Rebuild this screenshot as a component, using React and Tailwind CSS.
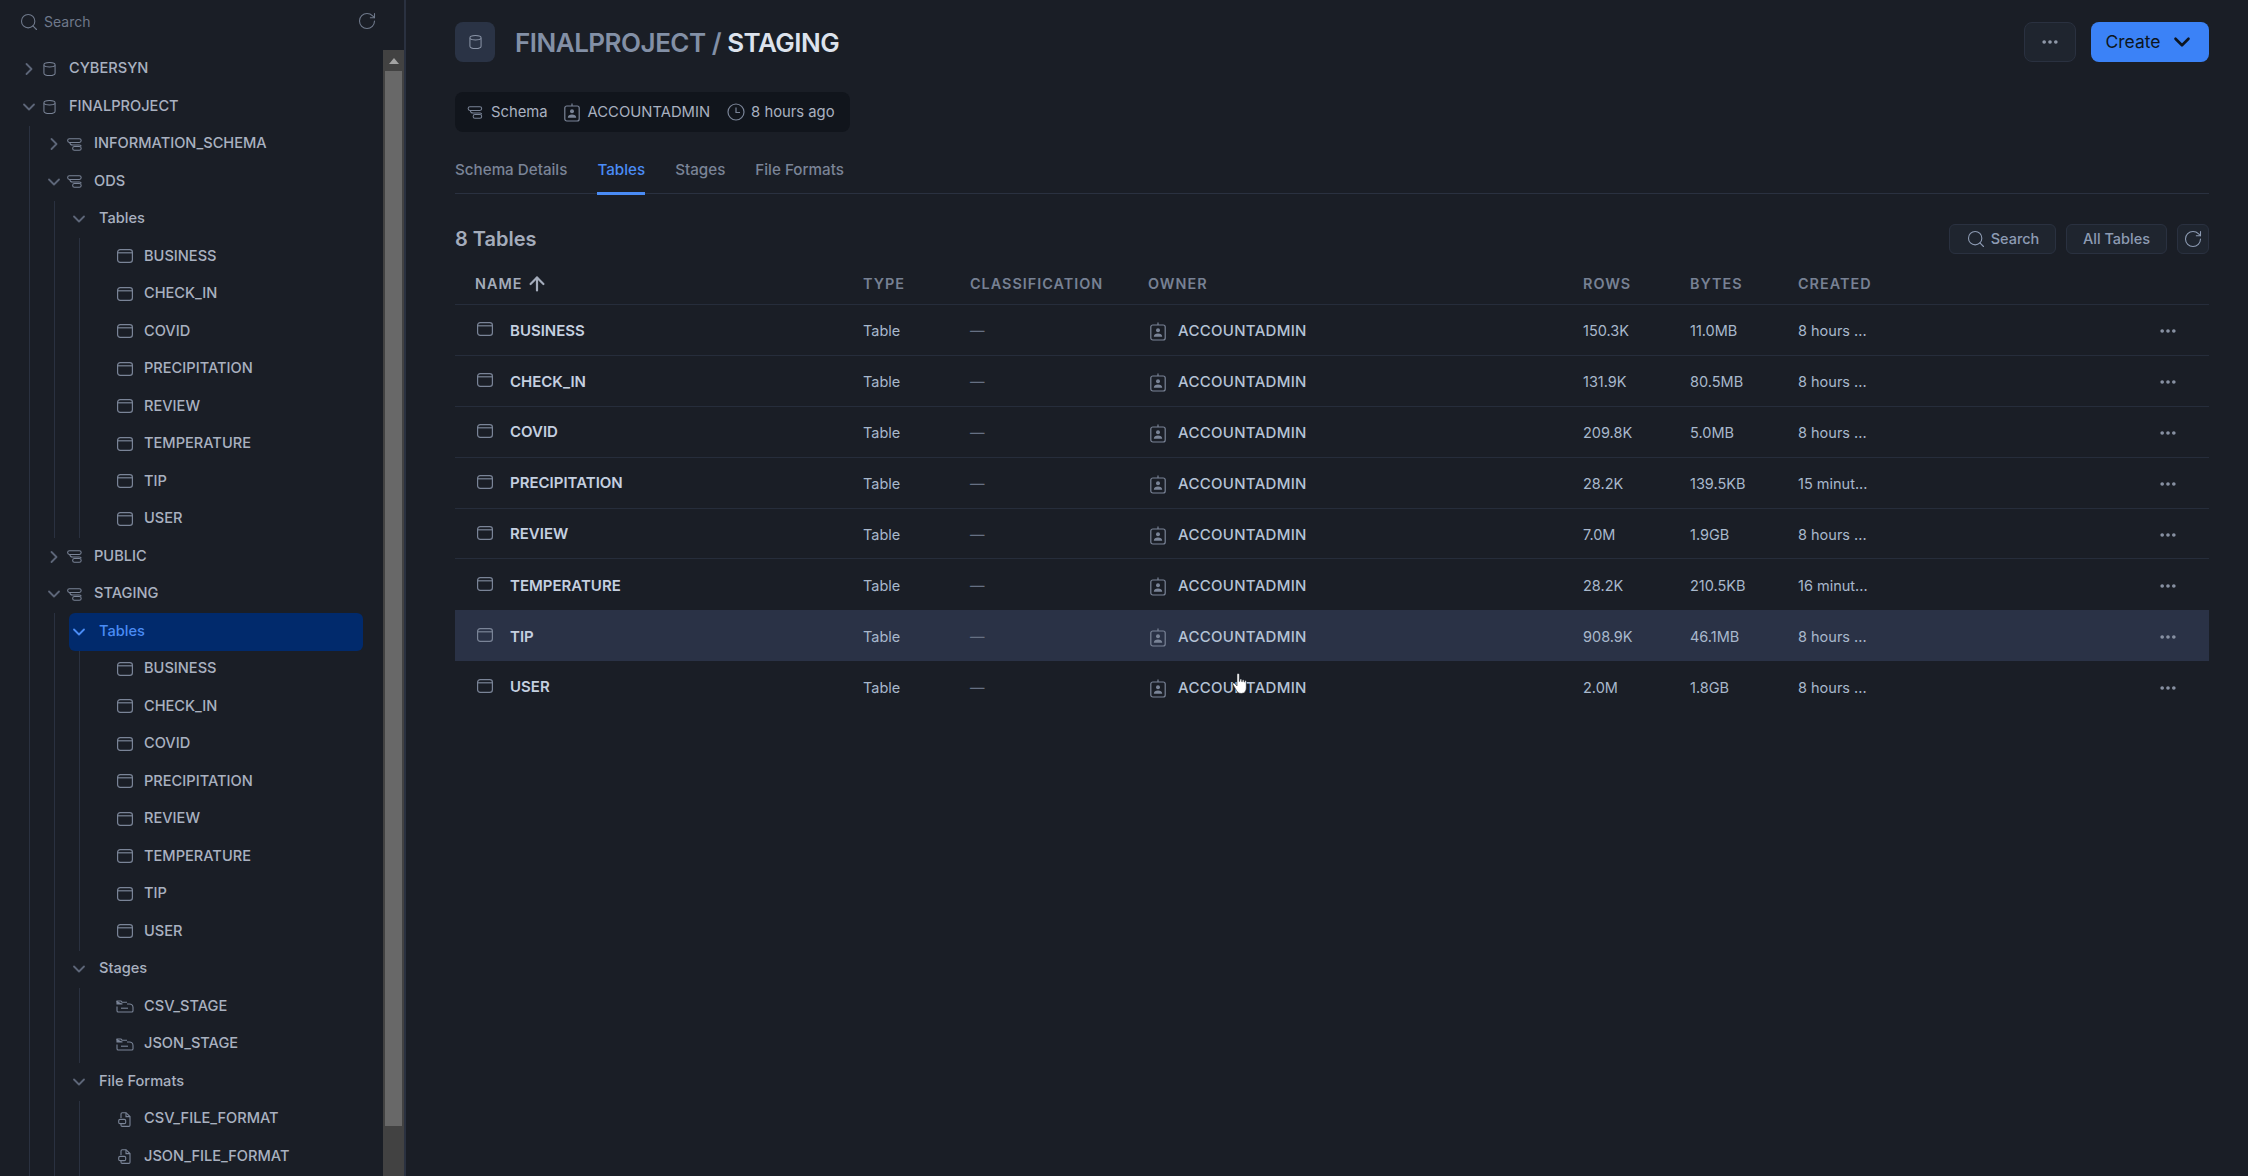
import React from 'react';
import { ChevronRight, ChevronDown, Search, RotateCw, Ellipsis, ArrowUp } from 'lucide-react';

const DatabaseIcon = ({ className }) => (
  <svg viewBox="0 0 14 16" fill="none" stroke="currentColor" strokeWidth="1.1" className={className}>
    <path d="M1 3.5C1 1.8 3.5 1 7 1s6 .8 6 2.5v9c0 1.7-2.5 2.5-6 2.5s-6-.8-6-2.5z" />
    <path d="M1 4.2C2 5.3 4.2 5.8 7 5.8s5-.5 6-1.6" />
  </svg>
);

const SchemaIcon = ({ className }) => (
  <svg viewBox="0 0 16 14" fill="none" stroke="currentColor" strokeWidth="1.1" className={className}>
    <rect x="0.6" y="0.8" width="14.6" height="4" rx="2" />
    <path d="M3 4.8C3 7 3.6 7.6 6 7.6h7.5" />
    <path d="M13.4 7.6c1 0 1.8.4 1.8 1.3" />
    <rect x="6" y="9.2" width="9.2" height="4" rx="2" />
  </svg>
);

const TableIcon = ({ className }) => (
  <svg viewBox="0 0 16 14" fill="none" stroke="currentColor" strokeWidth="1.2" className={className}>
    <rect x="0.6" y="0.6" width="14.8" height="12.8" rx="2.6" />
    <path d="M0.6 3.8h14.8" />
  </svg>
);

const StageIcon = ({ className }) => (
  <svg viewBox="0 0 18 13" fill="none" stroke="currentColor" strokeWidth="1.1" className={className}>
    <path d="M1 2.2V1h4l1 1.2h5" />
    <path d="M1 1v3h5.5" fill="currentColor" />
    <path d="M1 6.5v4.2c0 .8.5 1.3 1.3 1.3h13.4c.8 0 1.3-.5 1.3-1.3V7.5c0-2.2-1.6-3.5-3.6-3.5H11" />
    <path d="M5 8.2h7" />
  </svg>
);

const FileIcon = ({ className }) => (
  <svg viewBox="0 0 13 15" fill="none" stroke="currentColor" strokeWidth="1.1" className={className}>
    <path d="M3 6V2c0-.8.5-1.3 1.3-1.3H8L12 4.6v8.6c0 .7-.5 1.2-1.2 1.2H6" />
    <path d="M8 .8v3.8h4" />
    <rect x="0.7" y="7.4" width="7" height="4.2" rx="1.4" />
    <path d="M3 11.6v1.6c0 .7.4 1.2 1.2 1.2h2" />
  </svg>
);

const BadgeIcon = ({ className }) => (
  <svg viewBox="0 0 16 19" fill="none" stroke="currentColor" strokeWidth="1.2" className={className}>
    <rect x="0.8" y="3" width="14.4" height="15" rx="2" />
    <path d="M8 0.5V3" />
    <circle cx="8" cy="8.2" r="2" fill="currentColor" stroke="none" />
    <path d="M3.8 14.8c0-2 1.8-3.2 4.2-3.2s4.2 1.2 4.2 3.2z" fill="currentColor" stroke="none" />
  </svg>
);

const ClockIcon = ({ className }) => (
  <svg viewBox="0 0 18 18" fill="none" stroke="currentColor" strokeWidth="1.2" className={className}>
    <circle cx="9" cy="9" r="8" />
    <path d="M9 4.5V9.5h4" />
  </svg>
);

const tableNames = ['BUSINESS', 'CHECK_IN', 'COVID', 'PRECIPITATION', 'REVIEW', 'TEMPERATURE', 'TIP', 'USER'];
const tableLeaves = tableNames.map((label) => ({ label, icon: TableIcon, iconClass: 'w-4 h-[14px] -mt-px ml-[3px]' }));

const tree = [
  { label: 'CYBERSYN', icon: DatabaseIcon, iconClass: 'w-[13px] h-[16px] ml-1', collapsed: true },
  {
    label: 'FINALPROJECT',
    icon: DatabaseIcon,
    iconClass: 'w-[13px] h-[16px] ml-1',
    children: [
      { label: 'INFORMATION_SCHEMA', icon: SchemaIcon, iconClass: 'w-[15px] h-[13px] ml-[3px]', collapsed: true },
      {
        label: 'ODS',
        icon: SchemaIcon,
        iconClass: 'w-[15px] h-[13px] ml-[3px]',
        children: [{ label: 'Tables', group: true, children: tableLeaves }],
      },
      { label: 'PUBLIC', icon: SchemaIcon, iconClass: 'w-[15px] h-[13px] ml-[3px]', collapsed: true },
      {
        label: 'STAGING',
        icon: SchemaIcon,
        iconClass: 'w-[15px] h-[13px] ml-[3px]',
        children: [
          { label: 'Tables', group: true, active: true, children: tableLeaves },
          {
            label: 'Stages',
            group: true,
            children: [
              { label: 'CSV_STAGE', icon: StageIcon, iconClass: 'w-[18px] h-[13px] ml-[2px]' },
              { label: 'JSON_STAGE', icon: StageIcon, iconClass: 'w-[18px] h-[13px] ml-[2px]' },
            ],
          },
          {
            label: 'File Formats',
            group: true,
            children: [
              { label: 'CSV_FILE_FORMAT', icon: FileIcon, iconClass: 'w-[13px] h-[15px] ml-[4px]' },
              { label: 'JSON_FILE_FORMAT', icon: FileIcon, iconClass: 'w-[13px] h-[15px] ml-[4px]' },
            ],
          },
        ],
      },
    ],
  },
];

function TreeNode({ node }) {
  const Icon = node.icon;
  const hasChevron = node.collapsed || node.children;
  return (
    <div className="ml-[14px]">
      <div className={`flex h-[37.5px] items-center rounded-md text-[14.6px] ${node.active ? 'bg-[#012a6c] text-[#4a8cf5]' : 'text-[#a9b1c0]'}`}>
        <div className={`flex w-5 shrink-0 justify-center ${node.active ? 'text-[#4a8cf5]' : 'text-[#5d6678]'}`}>
          {node.collapsed && <ChevronRight size={20} strokeWidth={2.2} />}
          {!node.collapsed && hasChevron && <ChevronDown size={20} strokeWidth={2.2} />}
        </div>
        {node.group ? (
          <span className="ml-[10px] font-medium">{node.label}</span>
        ) : (
          <>
            <div className="flex w-[30px] shrink-0 items-center text-[#7a8497]">
              <Icon className={node.iconClass} />
            </div>
            <span className="font-medium whitespace-nowrap">{node.label}</span>
          </>
        )}
      </div>
      {node.children && (
        <div className="ml-[10px] border-l border-[#2a3140]">
          {node.children.map((child, i) => (
            <TreeNode key={i} node={child} />
          ))}
        </div>
      )}
    </div>
  );
}

function Sidebar() {
  return (
    <div className="flex h-full w-[406px] shrink-0 flex-col border-r-2 border-[#2a3140]">
      <div className="flex h-[50px] shrink-0 items-start justify-between pt-[11px] pl-[19px] pr-[27px] text-[#6f798b]">
        <div className="flex items-center gap-[5px] text-[14px]">
          <Search size={20} strokeWidth={1.3} />
          <span>Search</span>
        </div>
        <RotateCw size={20} strokeWidth={1.3} />
      </div>
      <div className="flex min-h-0 flex-1">
        <div className="w-[363px] overflow-hidden pt-[0.5px] pl-[5px]">
          {tree.map((node, i) => (
            <TreeNode key={i} node={node} />
          ))}
        </div>
        <div className="ml-[20px] flex w-[21px] flex-col bg-[#424242]">
          <div className="flex h-[21px] shrink-0 items-center justify-center">
            <div className="h-0 w-0 border-x-[5px] border-b-[6px] border-x-transparent border-b-[#a3a3a3]" />
          </div>
          <div className="mx-[2px] h-[1055px] bg-[#686868]" />
        </div>
      </div>
    </div>
  );
}

const rows = [
  ['BUSINESS', '150.3K', '11.0MB', '8 hours ...'],
  ['CHECK_IN', '131.9K', '80.5MB', '8 hours ...'],
  ['COVID', '209.8K', '5.0MB', '8 hours ...'],
  ['PRECIPITATION', '28.2K', '139.5KB', '15 minut...'],
  ['REVIEW', '7.0M', '1.9GB', '8 hours ...'],
  ['TEMPERATURE', '28.2K', '210.5KB', '16 minut...'],
  ['TIP', '908.9K', '46.1MB', '8 hours ...'],
  ['USER', '2.0M', '1.8GB', '8 hours ...'],
];

const gridCols = 'grid grid-cols-[408px_107px_178px_435px_107px_108px_1fr_60px]';

function TablesList() {
  return (
    <div>
      <div className={`${gridCols} h-[43px] items-center border-b border-[#262d3b] pt-[1px] text-[14.4px] font-semibold tracking-[1px] text-[#778194]`}>
        <div className="flex items-center gap-1 pl-5 text-[#a4acbb]">
          NAME <ArrowUp size={22} strokeWidth={2.4} />
        </div>
        <div>TYPE</div>
        <div>CLASSIFICATION</div>
        <div>OWNER</div>
        <div>ROWS</div>
        <div>BYTES</div>
        <div>CREATED</div>
      </div>
      {rows.map((row, i) => {
        const hovered = row[0] === 'TIP';
        return (
          <div key={row[0]} className={`${gridCols} h-[50.9px] items-center pt-[2px] text-[14.5px] text-[#a8b8cc] ${hovered ? 'bg-[#2a3246]' : ''} ${i < rows.length - 1 && !hovered && rows[i + 1][0] !== 'TIP' ? 'border-b border-[#262d3b]' : ''}`}>
            <div className="flex items-center pl-[22px]">
              <TableIcon className="mr-[17px] -mt-[3px] h-[14px] w-4 text-[#7a8497]" />
              <span className="text-[15px] font-semibold text-[#c5d0e0]">{row[0]}</span>
            </div>
            <div>Table</div>
            <div className="text-[#667083]">—</div>
            <div className="flex items-center pl-[2px] pt-px">
              <BadgeIcon className="mr-3 h-[19px] w-4 text-[#7a8497]" />
              <span className="text-[15px] font-medium tracking-[0.3px] text-[#b5c3d6]">ACCOUNTADMIN</span>
            </div>
            <div>{row[1]}</div>
            <div>{row[2]}</div>
            <div>{row[3]}</div>
            <div className="flex justify-end pr-[31px] text-[#8a93a5]">
              <Ellipsis size={20} strokeWidth={2.4} />
            </div>
          </div>
        );
      })}
    </div>
  );
}

function Main() {
  return (
    <div className="relative min-w-0 flex-1 pt-[22px] pl-[49px] pr-[39px]">
      <div className="flex h-10 items-center justify-between">
        <div className="flex items-center gap-5">
          <div className="flex h-10 w-10 items-center justify-center rounded-lg bg-[#2a3345] text-[#8a94a7]">
            <DatabaseIcon className="h-[16px] w-[13px]" />
          </div>
          <div className="text-[26px] font-semibold tracking-[-0.5px] text-[#8390a6]">
            FINALPROJECT / <span className="text-[#dde3ed]">STAGING</span>
          </div>
        </div>
        <div className="flex items-center gap-[15px]">
          <div className="flex h-10 w-[52px] items-center justify-center rounded-lg border border-[#2a3140] bg-[#1f252f] text-[#929bab]">
            <Ellipsis size={20} strokeWidth={2.4} />
          </div>
          <div className="flex h-10 w-[118px] items-center justify-center gap-[8px] rounded-lg bg-[#3b82f7] text-[17.5px] text-[#0d1520]">
            Create
            <ChevronDown size={26} strokeWidth={2.4} />
          </div>
        </div>
      </div>

      <div className="mt-[30px] flex h-[40px] w-[395px] items-center rounded-lg bg-[#11151c] pl-3 text-[14.8px] text-[#a9b1c0]">
        <SchemaIcon className="mr-2 h-[13px] w-[16px] text-[#7a8497]" />
        <span>Schema</span>
        <BadgeIcon className="mr-2 ml-[16px] h-[19px] w-4 text-[#7a8497]" />
        <span>ACCOUNTADMIN</span>
        <ClockIcon className="mr-[6px] ml-[17px] h-[18px] w-[18px] text-[#7a8497]" />
        <span>8 hours ago</span>
      </div>

      <div className="mt-[18px] flex h-[44px] gap-[30px] border-b border-[#2a3140] text-[15.2px] font-medium text-[#7a8497]">
        <div className="pt-[9px]">Schema Details</div>
        <div className="h-[45px] border-b-[3px] border-[#4a8cf5] pt-[9px] text-[#4a8cf5]">Tables</div>
        <div className="pt-[9px]">Stages</div>
        <div className="pt-[9px]">File Formats</div>
      </div>

      <div className="mt-[30px] flex h-[30px] items-center justify-between">
        <div className="text-[20px] font-semibold text-[#a4acbb]">8 Tables</div>
        <div className="flex items-center gap-[10px] text-[14.5px] font-medium text-[#8d9bb3]">
          <div className="flex h-[30px] w-[107px] items-center justify-center gap-[5px] rounded-md border border-[#2a3140] bg-[#1f252f]">
            <Search size={20} strokeWidth={1.3} />
            Search
          </div>
          <div className="flex h-[30px] w-[101px] items-center justify-center rounded-md border border-[#2a3140] bg-[#1f252f]">All Tables</div>
          <div className="flex h-[30px] w-[32px] items-center justify-center rounded-md border border-[#2a3140] bg-[#1f252f]">
            <RotateCw size={20} strokeWidth={1.3} />
          </div>
        </div>
      </div>

      <div className="mt-[8px]">
        <TablesList />
      </div>

      {/* mouse pointer from the screen capture */}
      <svg viewBox="0 0 16 22" className="absolute top-[673px] left-[826px] h-[22px] w-[17px]">
        <path d="M4.5 1.5c0-1.5 2.3-1.5 2.3 0v7l.5-.2V6.8c0-1.2 2-1.2 2 0v1.8l.4.1V7.6c0-1.1 1.9-1.1 1.9 0v1.4l.4.1v-.7c0-1.1 1.8-1 1.8.1v6.3c0 3.2-1.6 5.7-5 5.7-2.6 0-3.8-1.2-5-3.3L.3 11.4c-.6-1.1.9-2 1.7-1.1l2.5 2.6z" fill="#fff" stroke="#1a1e26" strokeWidth="0.6" />
      </svg>
    </div>
  );
}

export default function App() {
  return (
    <div className="flex h-[1176px] w-[2248px] overflow-hidden bg-[#1a1e26] font-['Inter',sans-serif]">
      <Sidebar />
      <Main />
    </div>
  );
}
